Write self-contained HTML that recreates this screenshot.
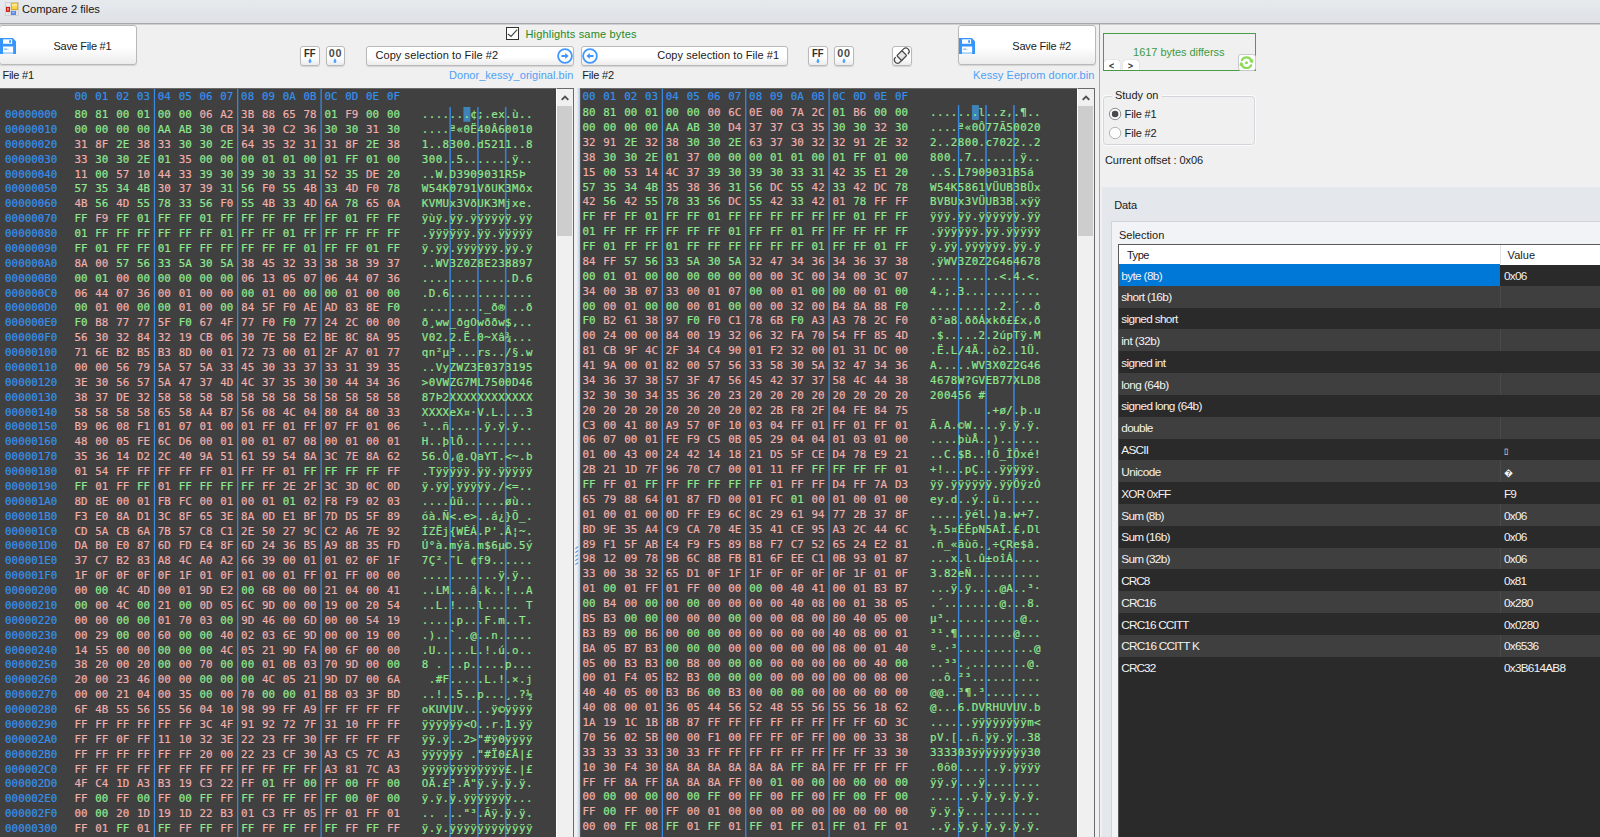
<!DOCTYPE html><html><head><meta charset="utf-8"><title>Compare 2 files</title><style>
*{box-sizing:border-box}
html,body{margin:0;padding:0}
body{width:1600px;height:837px;overflow:hidden;background:#f0f0f0;position:relative;font-family:"Liberation Sans",sans-serif;font-size:11.5px;color:#1a1a1a}
.abs,.t{position:absolute}
.t{white-space:pre;line-height:14px;height:14px}
.pn{position:absolute;background:#404040}
.r{position:absolute;left:0;height:14px;width:1100px;font-family:"DejaVu Sans Mono","Liberation Mono",monospace;font-size:10.83px;line-height:14px;white-space:pre}
.r span{position:absolute;top:0}
.r b{font-weight:normal}
.r span{-webkit-text-stroke:0.18px}
.o{color:#3590ee}
.h{word-spacing:1.270px}
.a{color:#8fe88f;letter-spacing:0.420px}
.g{color:#8fe88f}
.p{color:#f0aeac}
.hd{color:#3590ee}
.vl{position:absolute;height:837px}
.btn{position:absolute;border:1px solid #b9b9b9;border-radius:3px;background:linear-gradient(#fff 0%,#fff 55%,#ececec 100%);box-shadow:0 1px 1px rgba(0,0,0,.12)}
.sb{position:absolute;background:#f0f0f0}
</style></head><body>
<div class=pn style="left:0;top:88px;width:556px;height:749px;border-top:1px solid #6a6a6a"></div>
<svg class=abs style="left:0;top:0" width="1100" height="837"><rect x="153.82" y="88.8" width="1.25" height="748.2" fill="#3a8ae0"/><rect x="237.07" y="88.8" width="1.25" height="748.2" fill="#3a8ae0"/><rect x="320.48" y="88.8" width="1.25" height="748.2" fill="#3a8ae0"/></svg>
<svg class=abs style="left:0;top:0" width="1100" height="837"><rect x="449.35" y="107" width="1.6" height="730" fill="#3a80d0"/><rect x="477.15" y="107" width="1.6" height="730" fill="#3a80d0"/><rect x="504.90" y="107" width="1.6" height="730" fill="#3a80d0"/></svg>
<svg class=abs style="left:0;top:0" width="1100" height="837"><rect x="463.4" y="107" width="7.0" height="14.75" fill="#3f84b8"/></svg>
<div class=r style="top:90.25px"><span class="h hd" style="left:74.5px">00 01 02 03 04 05 06 07 08 09 0A 0B 0C 0D 0E 0F</span></div>
<div class=r style="top:108.05px"><span class=o style="left:5.1px">00000000</span><span class=h style="left:74.5px"><b class=g>80 81 00 01 00 00 </b><b class=p>06 A2 3B 88 65 78 </b><b class=g>01 </b><b class=p>F9 </b><b class=g>00 00</b></span><span class=a style="left:421.8px">.......¢;.ex.ù..</span></div>
<div class=r style="top:122.93px"><span class=o style="left:5.1px">00000010</span><span class=h style="left:74.5px"><b class=g>00 00 00 00 AA AB 30 </b><b class=p>CB 34 30 C2 36 </b><b class=g>30 30 </b><b class=p>31 </b><b class=g>30</b></span><span class=a style="left:421.8px">....ª«0Ë40Â60010</span></div>
<div class=r style="top:137.80px"><span class=o style="left:5.1px">00000020</span><span class=h style="left:74.5px"><b class=p>31 8F </b><b class=g>2E </b><b class=p>38 33 </b><b class=g>30 30 2E </b><b class=p>64 35 32 31 31 8F </b><b class=g>2E </b><b class=p>38</b></span><span class=a style="left:421.8px">1..8300.d5211..8</span></div>
<div class=r style="top:152.68px"><span class=o style="left:5.1px">00000030</span><span class=h style="left:74.5px"><b class=p>33 </b><b class=g>30 30 2E 01 </b><b class=p>35 </b><b class=g>00 00 00 01 01 00 01 FF 01 00</b></span><span class=a style="left:421.8px">300..5.......ÿ..</span></div>
<div class=r style="top:167.55px"><span class=o style="left:5.1px">00000040</span><span class=h style="left:74.5px"><b class=p>11 </b><b class=g>00 </b><b class=p>57 10 44 33 </b><b class=g>39 30 39 30 33 31 </b><b class=p>52 </b><b class=g>35 </b><b class=p>DE </b><b class=g>20</b></span><span class=a style="left:421.8px">..W.D3909031R5Þ </span></div>
<div class=r style="top:182.43px"><span class=o style="left:5.1px">00000050</span><span class=h style="left:74.5px"><b class=g>57 35 34 4B </b><b class=p>30 37 39 </b><b class=g>31 56 </b><b class=p>F0 </b><b class=g>55 </b><b class=p>4B </b><b class=g>33 </b><b class=p>4D F0 </b><b class=g>78</b></span><span class=a style="left:421.8px">W54K0791VðUK3Mðx</span></div>
<div class=r style="top:197.30px"><span class=o style="left:5.1px">00000060</span><span class=h style="left:74.5px"><b class=p>4B </b><b class=g>56 </b><b class=p>4D </b><b class=g>55 78 33 56 </b><b class=p>F0 </b><b class=g>55 </b><b class=p>4B </b><b class=g>33 </b><b class=p>4D 6A </b><b class=g>78 </b><b class=p>65 0A</b></span><span class=a style="left:421.8px">KVMUx3VðUK3Mjxe.</span></div>
<div class=r style="top:212.18px"><span class=o style="left:5.1px">00000070</span><span class=h style="left:74.5px"><b class=g>FF </b><b class=p>F9 </b><b class=g>FF 01 FF FF 01 FF FF FF FF FF FF 01 FF FF</b></span><span class=a style="left:421.8px">ÿùÿ.ÿÿ.ÿÿÿÿÿÿ.ÿÿ</span></div>
<div class=r style="top:227.05px"><span class=o style="left:5.1px">00000080</span><span class=h style="left:74.5px"><b class=g>01 FF FF FF FF FF FF 01 FF FF 01 FF FF FF FF FF</b></span><span class=a style="left:421.8px">.ÿÿÿÿÿÿ.ÿÿ.ÿÿÿÿÿ</span></div>
<div class=r style="top:241.93px"><span class=o style="left:5.1px">00000090</span><span class=h style="left:74.5px"><b class=g>FF 01 FF FF 01 FF FF FF FF FF FF 01 FF FF 01 FF</b></span><span class=a style="left:421.8px">ÿ.ÿÿ.ÿÿÿÿÿÿ.ÿÿ.ÿ</span></div>
<div class=r style="top:256.80px"><span class=o style="left:5.1px">000000A0</span><span class=h style="left:74.5px"><b class=p>8A 00 </b><b class=g>57 56 33 5A 30 5A </b><b class=p>38 45 32 33 38 38 39 37</b></span><span class=a style="left:421.8px">..WV3Z0Z8E238897</span></div>
<div class=r style="top:271.68px"><span class=o style="left:5.1px">000000B0</span><span class=h style="left:74.5px"><b class=g>00 01 </b><b class=p>00 </b><b class=g>00 00 00 00 00 </b><b class=p>06 13 05 07 06 44 07 36</b></span><span class=a style="left:421.8px">.............D.6</span></div>
<div class=r style="top:286.55px"><span class=o style="left:5.1px">000000C0</span><span class=h style="left:74.5px"><b class=p>06 44 07 36 00 01 00 00 </b><b class=g>00 </b><b class=p>01 00 </b><b class=g>00 00 </b><b class=p>01 00 </b><b class=g>00</b></span><span class=a style="left:421.8px">.D.6............</span></div>
<div class=r style="top:301.43px"><span class=o style="left:5.1px">000000D0</span><span class=h style="left:74.5px"><b class=g>00 </b><b class=p>01 00 </b><b class=g>00 00 </b><b class=p>01 00 </b><b class=g>00 </b><b class=p>84 5F F0 AE AD 83 8E </b><b class=g>F0</b></span><span class=a style="left:421.8px">........._ð® ..ð</span></div>
<div class=r style="top:316.30px"><span class=o style="left:5.1px">000000E0</span><span class=h style="left:74.5px"><b class=g>F0 </b><b class=p>B8 77 77 5F </b><b class=g>F0 </b><b class=p>67 4F 77 F0 </b><b class=g>F0 </b><b class=p>77 24 2C 00 00</b></span><span class=a style="left:421.8px">ð¸ww_ðgOwððw$,..</span></div>
<div class=r style="top:331.18px"><span class=o style="left:5.1px">000000F0</span><span class=h style="left:74.5px"><b class=p>56 30 32 84 32 19 CB 06 30 7E 58 E2 BE 8C 8A 95</b></span><span class=a style="left:421.8px">V02.2.Ë.0~Xâ¾...</span></div>
<div class=r style="top:346.05px"><span class=o style="left:5.1px">00000100</span><span class=h style="left:74.5px"><b class=p>71 6E B2 B5 B3 8D 00 01 72 73 00 01 2F A7 01 77</b></span><span class=a style="left:421.8px">qn²µ³...rs../§.w</span></div>
<div class=r style="top:360.93px"><span class=o style="left:5.1px">00000110</span><span class=h style="left:74.5px"><b class=p>00 00 56 79 5A 57 5A 33 45 30 33 37 33 31 39 35</b></span><span class=a style="left:421.8px">..VyZWZ3E0373195</span></div>
<div class=r style="top:375.80px"><span class=o style="left:5.1px">00000120</span><span class=h style="left:74.5px"><b class=p>3E 30 56 57 5A 47 37 4D 4C 37 35 30 30 44 34 36</b></span><span class=a style="left:421.8px">&gt;0VWZG7ML7500D46</span></div>
<div class=r style="top:390.68px"><span class=o style="left:5.1px">00000130</span><span class=h style="left:74.5px"><b class=p>38 37 DE 32 58 58 58 58 58 58 58 58 58 58 58 58</b></span><span class=a style="left:421.8px">87Þ2XXXXXXXXXXXX</span></div>
<div class=r style="top:405.55px"><span class=o style="left:5.1px">00000140</span><span class=h style="left:74.5px"><b class=p>58 58 58 58 65 58 A4 B7 56 08 4C 04 80 84 80 33</b></span><span class=a style="left:421.8px">XXXXeX¤·V.L....3</span></div>
<div class=r style="top:420.43px"><span class=o style="left:5.1px">00000150</span><span class=h style="left:74.5px"><b class=p>B9 06 08 F1 01 07 01 00 01 FF 01 FF 07 FF 01 06</b></span><span class=a style="left:421.8px">¹..ñ.....ÿ.ÿ.ÿ..</span></div>
<div class=r style="top:435.30px"><span class=o style="left:5.1px">00000160</span><span class=h style="left:74.5px"><b class=p>48 00 05 FE 6C D6 00 01 00 01 07 08 00 01 00 01</b></span><span class=a style="left:421.8px">H..þlÖ..........</span></div>
<div class=r style="top:450.18px"><span class=o style="left:5.1px">00000170</span><span class=h style="left:74.5px"><b class=p>35 36 14 D2 2C 40 9A 51 61 59 54 8A 3C 7E 8A 62</b></span><span class=a style="left:421.8px">56.Ò,@.QaYT.&lt;~.b</span></div>
<div class=r style="top:465.05px"><span class=o style="left:5.1px">00000180</span><span class=h style="left:74.5px"><b class=p>01 54 FF FF FF FF FF 01 FF FF 01 </b><b class=g>FF FF FF FF </b><b class=p>FF</b></span><span class=a style="left:421.8px">.Tÿÿÿÿÿ.ÿÿ.ÿÿÿÿÿ</span></div>
<div class=r style="top:479.93px"><span class=o style="left:5.1px">00000190</span><span class=h style="left:74.5px"><b class=g>FF </b><b class=p>01 FF </b><b class=g>FF </b><b class=p>01 </b><b class=g>FF FF FF FF </b><b class=p>FF 2E 2F 3C 3D 0C 0D</b></span><span class=a style="left:421.8px">ÿ.ÿÿ.ÿÿÿÿÿ./&lt;=..</span></div>
<div class=r style="top:494.80px"><span class=o style="left:5.1px">000001A0</span><span class=h style="left:74.5px"><b class=p>8D 8E 00 01 FB FC 00 01 00 01 </b><b class=g>01 </b><b class=p>02 F8 F9 02 03</b></span><span class=a style="left:421.8px">....ûü......øù..</span></div>
<div class=r style="top:509.67px"><span class=o style="left:5.1px">000001B0</span><span class=h style="left:74.5px"><b class=p>F3 E0 8A D1 3C 8F 65 3E 8A 0D E1 BF 7D D5 5F 89</b></span><span class=a style="left:421.8px">óà.Ñ&lt;.e&gt;..á¿}Õ_.</span></div>
<div class=r style="top:524.55px"><span class=o style="left:5.1px">000001C0</span><span class=h style="left:74.5px"><b class=p>CD 5A CB 6A 7B 57 C8 C1 2E 50 27 9C C2 A6 7E 92</b></span><span class=a style="left:421.8px">ÍZËj{WÈÁ.P'.Â¦~.</span></div>
<div class=r style="top:539.42px"><span class=o style="left:5.1px">000001D0</span><span class=h style="left:74.5px"><b class=p>DA B0 E0 87 6D FD E4 8F 6D 24 36 B5 A9 8B 35 FD</b></span><span class=a style="left:421.8px">Ú°à.mýä.m$6µ©.5ý</span></div>
<div class=r style="top:554.30px"><span class=o style="left:5.1px">000001E0</span><span class=h style="left:74.5px"><b class=p>37 C7 B2 83 A8 4C A0 A2 66 39 00 01 01 02 0F 1F</b></span><span class=a style="left:421.8px">7Ç².¨L ¢f9......</span></div>
<div class=r style="top:569.17px"><span class=o style="left:5.1px">000001F0</span><span class=h style="left:74.5px"><b class=p>1F 0F 0F 0F 0F 1F 01 0F 01 00 01 FF 01 FF 00 00</b></span><span class=a style="left:421.8px">...........ÿ.ÿ..</span></div>
<div class=r style="top:584.05px"><span class=o style="left:5.1px">00000200</span><span class=h style="left:74.5px"><b class=p>00 </b><b class=g>00 </b><b class=p>4C 4D 00 01 9D E2 </b><b class=g>00 </b><b class=p>6B 00 00 21 04 00 41</b></span><span class=a style="left:421.8px">..LM...â.k..!..A</span></div>
<div class=r style="top:598.92px"><span class=o style="left:5.1px">00000210</span><span class=h style="left:74.5px"><b class=g>00 </b><b class=p>00 4C </b><b class=g>00 </b><b class=p>21 </b><b class=g>00 </b><b class=p>0D 05 6C 9D 00 00 19 00 20 54</b></span><span class=a style="left:421.8px">..L.!...l..... T</span></div>
<div class=r style="top:613.80px"><span class=o style="left:5.1px">00000220</span><span class=h style="left:74.5px"><b class=p>00 00 </b><b class=g>00 00 </b><b class=p>01 70 03 </b><b class=g>00 </b><b class=p>9D 46 00 6D 00 00 54 19</b></span><span class=a style="left:421.8px">.....p...F.m..T.</span></div>
<div class=r style="top:628.67px"><span class=o style="left:5.1px">00000230</span><span class=h style="left:74.5px"><b class=p>00 29 </b><b class=g>00 </b><b class=p>00 60 </b><b class=g>00 00 </b><b class=p>40 02 03 6E 9D 00 00 19 00</b></span><span class=a style="left:421.8px">.)..`..@..n.....</span></div>
<div class=r style="top:643.55px"><span class=o style="left:5.1px">00000240</span><span class=h style="left:74.5px"><b class=p>14 55 00 00 </b><b class=g>00 00 00 </b><b class=p>4C 05 21 9D FA 00 6F 00 00</b></span><span class=a style="left:421.8px">.U.....L.!.ú.o..</span></div>
<div class=r style="top:658.42px"><span class=o style="left:5.1px">00000250</span><span class=h style="left:74.5px"><b class=p>38 20 00 20 </b><b class=g>00 </b><b class=p>00 70 </b><b class=g>00 00 </b><b class=p>01 0B 03 70 9D 00 </b><b class=g>00</b></span><span class=a style="left:421.8px">8 . ..p.....p...</span></div>
<div class=r style="top:673.30px"><span class=o style="left:5.1px">00000260</span><span class=h style="left:74.5px"><b class=p>20 00 23 46 00 00 </b><b class=g>00 00 00 </b><b class=p>4C 05 21 9D D7 00 6A</b></span><span class=a style="left:421.8px"> .#F.....L.!.×.j</span></div>
<div class=r style="top:688.17px"><span class=o style="left:5.1px">00000270</span><span class=h style="left:74.5px"><b class=p>00 00 21 04 00 35 </b><b class=g>00 </b><b class=p>00 70 </b><b class=g>00 00 </b><b class=p>01 B8 03 3F BD</b></span><span class=a style="left:421.8px">..!..5..p...¸.?½</span></div>
<div class=r style="top:703.05px"><span class=o style="left:5.1px">00000280</span><span class=h style="left:74.5px"><b class=p>6F 4B 55 56 55 56 04 10 98 99 FF A9 FF FF FF FF</b></span><span class=a style="left:421.8px">oKUVUV....ÿ©ÿÿÿÿ</span></div>
<div class=r style="top:717.92px"><span class=o style="left:5.1px">00000290</span><span class=h style="left:74.5px"><b class=p>FF FF FF FF FF FF 3C 4F 91 92 72 7F 31 10 FF FF</b></span><span class=a style="left:421.8px">ÿÿÿÿÿÿ&lt;O..r.1.ÿÿ</span></div>
<div class=r style="top:732.80px"><span class=o style="left:5.1px">000002A0</span><span class=h style="left:74.5px"><b class=p>FF FF 0F FF 11 10 32 3E 22 23 FF 30 FF FF FF FF</b></span><span class=a style="left:421.8px">ÿÿ.ÿ..2&gt;"#ÿ0ÿÿÿÿ</span></div>
<div class=r style="top:747.67px"><span class=o style="left:5.1px">000002B0</span><span class=h style="left:74.5px"><b class=p>FF FF FF FF FF FF 20 00 22 23 CF 30 A3 C5 7C A3</b></span><span class=a style="left:421.8px">ÿÿÿÿÿÿ ."#Ï0£Å|£</span></div>
<div class=r style="top:762.55px"><span class=o style="left:5.1px">000002C0</span><span class=h style="left:74.5px"><b class=p>FF FF FF FF FF FF FF FF FF FF </b><b class=g>FF </b><b class=p>FF A3 81 7C A3</b></span><span class=a style="left:421.8px">ÿÿÿÿÿÿÿÿÿÿÿÿ£.|£</span></div>
<div class=r style="top:777.42px"><span class=o style="left:5.1px">000002D0</span><span class=h style="left:74.5px"><b class=p>4F C4 1D A3 B3 19 C3 22 FF </b><b class=g>01 </b><b class=p>FF </b><b class=g>00 </b><b class=p>FF </b><b class=g>00 </b><b class=p>FF </b><b class=g>00</b></span><span class=a style="left:421.8px">OÄ.£³.Ã"ÿ.ÿ.ÿ.ÿ.</span></div>
<div class=r style="top:792.30px"><span class=o style="left:5.1px">000002E0</span><span class=h style="left:74.5px"><b class=p>FF </b><b class=g>00 </b><b class=p>FF </b><b class=g>00 </b><b class=p>FF </b><b class=g>00 FF </b><b class=p>FF </b><b class=g>FF </b><b class=p>FF </b><b class=g>FF </b><b class=p>FF </b><b class=g>FF 00 </b><b class=p>0F </b><b class=g>00</b></span><span class=a style="left:421.8px">ÿ.ÿ.ÿ.ÿÿÿÿÿÿÿ...</span></div>
<div class=r style="top:807.17px"><span class=o style="left:5.1px">000002F0</span><span class=h style="left:74.5px"><b class=p>00 </b><b class=g>00 </b><b class=p>20 1D 19 1D 22 B3 01 C3 FF 05 FF 01 FF 01</b></span><span class=a style="left:421.8px">.. ..."³.Ãÿ.ÿ.ÿ.</span></div>
<div class=r style="top:822.05px"><span class=o style="left:5.1px">00000300</span><span class=h style="left:74.5px"><b class=p>FF 01 </b><b class=g>FF </b><b class=p>01 </b><b class=g>FF </b><b class=p>FF </b><b class=g>FF </b><b class=p>FF </b><b class=g>FF </b><b class=p>FF </b><b class=g>FF </b><b class=p>FF </b><b class=g>FF </b><b class=p>FF </b><b class=g>FF </b><b class=p>FF</b></span><span class=a style="left:421.8px">ÿ.ÿ.ÿÿÿÿÿÿÿÿÿÿÿÿ</span></div>
<div class=sb style="left:556px;top:88px;width:18px;height:749px;background:#f0f0f0;border-left:1px solid #fff;border-right:1px solid #6a6a6a;border-top:1px solid #6a6a6a"></div>
<div class=abs style="left:557px;top:106px;width:15.3px;height:130px;background:#cdcdcd"></div>
<svg class=abs style="left:557px;top:89px" width="16" height="17" viewBox="0 0 16 17"><path d="M4.7 10.9 L8 7.6 L11.3 10.9" fill="none" stroke="#505050" stroke-width="1.9"/></svg>
<div class=abs style="left:577.3px;top:88px;width:2.7px;height:749px;background:linear-gradient(90deg,#f0f0f0,#a9c8f0)"></div>
<div class=pn style="left:580px;top:88px;width:497px;height:749px;border-top:1px solid #6a6a6a;border-left:1px solid #555"></div>
<svg class=abs style="left:0;top:0" width="1100" height="837"><rect x="661.77" y="88.8" width="1.25" height="748.2" fill="#3a8ae0"/><rect x="745.12" y="88.8" width="1.25" height="748.2" fill="#3a8ae0"/><rect x="828.48" y="88.8" width="1.25" height="748.2" fill="#3a8ae0"/></svg>
<svg class=abs style="left:0;top:0" width="1100" height="837"><rect x="957.90" y="105.1" width="1.4" height="731.9" fill="#3a8ae0"/></svg>
<svg class=abs style="left:0;top:0" width="1100" height="837"><rect x="985.20" y="105.1" width="1.7" height="731.9" fill="#3a80d0"/><rect x="1013.10" y="105.1" width="1.7" height="731.9" fill="#3a80d0"/></svg>
<svg class=abs style="left:0;top:0" width="1100" height="837"><rect x="971.9" y="105.1" width="7.0" height="14.8" fill="#3f84b8"/></svg>
<div class=r style="top:90.25px"><span class="h hd" style="left:582.5px">00 01 02 03 04 05 06 07 08 09 0A 0B 0C 0D 0E 0F</span></div>
<div class=r style="top:106.20px"><span class=h style="left:582.5px"><b class=g>80 81 00 01 00 00 </b><b class=p>00 6C 0E 00 7A 2C </b><b class=g>01 </b><b class=p>B6 </b><b class=g>00 00</b></span><span class=a style="left:930.0px">.......l..z,.¶..</span></div>
<div class=r style="top:121.08px"><span class=h style="left:582.5px"><b class=g>00 00 00 00 AA AB 30 </b><b class=p>D4 37 37 C3 35 </b><b class=g>30 30 </b><b class=p>32 </b><b class=g>30</b></span><span class=a style="left:930.0px">....ª«0Ô77Ã50020</span></div>
<div class=r style="top:135.95px"><span class=h style="left:582.5px"><b class=p>32 91 </b><b class=g>2E </b><b class=p>32 38 </b><b class=g>30 30 2E </b><b class=p>63 37 30 32 32 91 </b><b class=g>2E </b><b class=p>32</b></span><span class=a style="left:930.0px">2..2800.c7022..2</span></div>
<div class=r style="top:150.82px"><span class=h style="left:582.5px"><b class=p>38 </b><b class=g>30 30 2E 01 </b><b class=p>37 </b><b class=g>00 00 00 01 01 00 01 FF 01 00</b></span><span class=a style="left:930.0px">800..7.......ÿ..</span></div>
<div class=r style="top:165.70px"><span class=h style="left:582.5px"><b class=p>15 </b><b class=g>00 </b><b class=p>53 14 4C 37 </b><b class=g>39 30 39 30 33 31 </b><b class=p>42 </b><b class=g>35 </b><b class=p>E1 </b><b class=g>20</b></span><span class=a style="left:930.0px">..S.L7909031B5á </span></div>
<div class=r style="top:180.57px"><span class=h style="left:582.5px"><b class=g>57 35 34 4B </b><b class=p>35 38 36 </b><b class=g>31 56 </b><b class=p>DC </b><b class=g>55 </b><b class=p>42 </b><b class=g>33 </b><b class=p>42 DC </b><b class=g>78</b></span><span class=a style="left:930.0px">W54K5861VÜUB3BÜx</span></div>
<div class=r style="top:195.45px"><span class=h style="left:582.5px"><b class=p>42 </b><b class=g>56 </b><b class=p>42 </b><b class=g>55 78 33 56 </b><b class=p>DC </b><b class=g>55 </b><b class=p>42 </b><b class=g>33 </b><b class=p>42 01 </b><b class=g>78 </b><b class=p>FF FF</b></span><span class=a style="left:930.0px">BVBUx3VÜUB3B.xÿÿ</span></div>
<div class=r style="top:210.32px"><span class=h style="left:582.5px"><b class=g>FF </b><b class=p>FF </b><b class=g>FF 01 FF FF 01 FF FF FF FF FF FF 01 FF FF</b></span><span class=a style="left:930.0px">ÿÿÿ.ÿÿ.ÿÿÿÿÿÿ.ÿÿ</span></div>
<div class=r style="top:225.20px"><span class=h style="left:582.5px"><b class=g>01 FF FF FF FF FF FF 01 FF FF 01 FF FF FF FF FF</b></span><span class=a style="left:930.0px">.ÿÿÿÿÿÿ.ÿÿ.ÿÿÿÿÿ</span></div>
<div class=r style="top:240.07px"><span class=h style="left:582.5px"><b class=g>FF 01 FF FF 01 FF FF FF FF FF FF 01 FF FF 01 FF</b></span><span class=a style="left:930.0px">ÿ.ÿÿ.ÿÿÿÿÿÿ.ÿÿ.ÿ</span></div>
<div class=r style="top:254.95px"><span class=h style="left:582.5px"><b class=p>84 FF </b><b class=g>57 56 33 5A 30 5A </b><b class=p>32 47 34 36 34 36 37 38</b></span><span class=a style="left:930.0px">.ÿWV3Z0Z2G464678</span></div>
<div class=r style="top:269.82px"><span class=h style="left:582.5px"><b class=g>00 01 </b><b class=p>01 </b><b class=g>00 00 00 00 00 </b><b class=p>00 00 3C 00 34 00 3C 07</b></span><span class=a style="left:930.0px">..........&lt;.4.&lt;.</span></div>
<div class=r style="top:284.70px"><span class=h style="left:582.5px"><b class=p>34 00 3B 07 33 00 01 07 </b><b class=g>00 </b><b class=p>00 01 </b><b class=g>00 00 </b><b class=p>00 01 </b><b class=g>00</b></span><span class=a style="left:930.0px">4.;.3...........</span></div>
<div class=r style="top:299.57px"><span class=h style="left:582.5px"><b class=g>00 </b><b class=p>00 01 </b><b class=g>00 00 </b><b class=p>00 01 </b><b class=g>00 </b><b class=p>00 00 32 00 B4 8A 88 </b><b class=g>F0</b></span><span class=a style="left:930.0px">..........2.´..ð</span></div>
<div class=r style="top:314.45px"><span class=h style="left:582.5px"><b class=g>F0 </b><b class=p>B2 61 38 97 </b><b class=g>F0 </b><b class=p>F0 C1 78 6B </b><b class=g>F0 </b><b class=p>A3 A3 78 2C F0</b></span><span class=a style="left:930.0px">ð²a8.ððÁxkð££x,ð</span></div>
<div class=r style="top:329.32px"><span class=h style="left:582.5px"><b class=p>00 24 00 00 84 00 19 32 06 32 FA 70 54 FF 85 4D</b></span><span class=a style="left:930.0px">.$.....2.2úpTÿ.M</span></div>
<div class=r style="top:344.20px"><span class=h style="left:582.5px"><b class=p>81 CB 9F 4C 2F 34 C4 90 01 F2 32 00 01 31 DC 00</b></span><span class=a style="left:930.0px">.Ë.L/4Ä..ò2..1Ü.</span></div>
<div class=r style="top:359.07px"><span class=h style="left:582.5px"><b class=p>41 9A 00 01 82 00 57 56 33 58 30 5A 32 47 34 36</b></span><span class=a style="left:930.0px">A.....WV3X0Z2G46</span></div>
<div class=r style="top:373.95px"><span class=h style="left:582.5px"><b class=p>34 36 37 38 57 3F 47 56 45 42 37 37 58 4C 44 38</b></span><span class=a style="left:930.0px">4678W?GVEB77XLD8</span></div>
<div class=r style="top:388.82px"><span class=h style="left:582.5px"><b class=p>32 30 30 34 35 36 20 23 20 20 20 20 20 20 20 20</b></span><span class=a style="left:930.0px">200456 #        </span></div>
<div class=r style="top:403.70px"><span class=h style="left:582.5px"><b class=p>20 20 20 20 20 20 20 20 02 2B F8 2F 04 FE 84 75</b></span><span class=a style="left:930.0px">        .+ø/.þ.u</span></div>
<div class=r style="top:418.57px"><span class=h style="left:582.5px"><b class=p>C3 00 41 80 A9 57 0F 10 03 04 FF 01 FF 01 FF 01</b></span><span class=a style="left:930.0px">Ã.A.©W....ÿ.ÿ.ÿ.</span></div>
<div class=r style="top:433.45px"><span class=h style="left:582.5px"><b class=p>06 07 00 01 FE F9 C5 0B 05 29 04 04 01 03 01 00</b></span><span class=a style="left:930.0px">....þùÅ..)......</span></div>
<div class=r style="top:448.32px"><span class=h style="left:582.5px"><b class=p>01 00 43 00 24 42 14 18 21 D5 5F CE D4 78 E9 21</b></span><span class=a style="left:930.0px">..C.$B..!Õ_ÎÔxé!</span></div>
<div class=r style="top:463.20px"><span class=h style="left:582.5px"><b class=p>2B 21 1D 7F 96 70 C7 00 01 11 FF </b><b class=g>FF FF FF FF </b><b class=p>01</b></span><span class=a style="left:930.0px">+!...pÇ...ÿÿÿÿÿ.</span></div>
<div class=r style="top:478.07px"><span class=h style="left:582.5px"><b class=g>FF </b><b class=p>FF 01 </b><b class=g>FF </b><b class=p>FF </b><b class=g>FF FF FF FF </b><b class=p>01 FF FF D4 FF 7A D3</b></span><span class=a style="left:930.0px">ÿÿ.ÿÿÿÿÿÿ.ÿÿÔÿzÓ</span></div>
<div class=r style="top:492.95px"><span class=h style="left:582.5px"><b class=p>65 79 88 64 01 87 FD 00 01 FC </b><b class=g>01 </b><b class=p>00 01 00 01 00</b></span><span class=a style="left:930.0px">ey.d..ý..ü......</span></div>
<div class=r style="top:507.83px"><span class=h style="left:582.5px"><b class=p>01 00 01 00 0D FF E9 6C 8C 29 61 94 77 2B 37 8F</b></span><span class=a style="left:930.0px">.....ÿél.)a.w+7.</span></div>
<div class=r style="top:522.70px"><span class=h style="left:582.5px"><b class=p>BD 9E 35 A4 C9 CA 70 4E 35 41 CE 95 A3 2C 44 6C</b></span><span class=a style="left:930.0px">½.5¤ÉÊpN5AÎ.£,Dl</span></div>
<div class=r style="top:537.58px"><span class=h style="left:582.5px"><b class=p>89 F1 5F AB E4 F9 F5 89 B8 F7 C7 52 65 24 E2 81</b></span><span class=a style="left:930.0px">.ñ_«äùõ.¸÷ÇRe$â.</span></div>
<div class=r style="top:552.45px"><span class=h style="left:582.5px"><b class=p>98 12 09 78 9B 6C 8B FB B1 6F EE C1 0B 93 01 87</b></span><span class=a style="left:930.0px">...x.l.û±oîÁ....</span></div>
<div class=r style="top:567.33px"><span class=h style="left:582.5px"><b class=p>33 00 38 32 65 D1 0F 1F 1F 0F 0F 0F 0F 1F 01 0F</b></span><span class=a style="left:930.0px">3.82eÑ..........</span></div>
<div class=r style="top:582.20px"><span class=h style="left:582.5px"><b class=p>01 </b><b class=g>00 </b><b class=p>01 FF 01 FF 00 00 </b><b class=g>00 </b><b class=p>00 40 41 00 01 B3 B7</b></span><span class=a style="left:930.0px">...ÿ.ÿ....@A..³·</span></div>
<div class=r style="top:597.08px"><span class=h style="left:582.5px"><b class=g>00 </b><b class=p>B4 00 </b><b class=g>00 </b><b class=p>00 </b><b class=g>00 </b><b class=p>00 00 00 00 40 08 00 01 38 05</b></span><span class=a style="left:930.0px">.´........@...8.</span></div>
<div class=r style="top:611.95px"><span class=h style="left:582.5px"><b class=p>B5 B3 </b><b class=g>00 00 </b><b class=p>00 00 00 </b><b class=g>00 </b><b class=p>00 00 08 00 80 40 05 00</b></span><span class=a style="left:930.0px">µ³...........@..</span></div>
<div class=r style="top:626.83px"><span class=h style="left:582.5px"><b class=p>B3 B9 </b><b class=g>00 </b><b class=p>B6 00 </b><b class=g>00 00 </b><b class=p>00 00 00 00 00 40 08 00 01</b></span><span class=a style="left:930.0px">³¹.¶........@...</span></div>
<div class=r style="top:641.70px"><span class=h style="left:582.5px"><b class=p>BA 05 B7 B3 </b><b class=g>00 00 00 </b><b class=p>00 00 00 00 00 08 00 01 40</b></span><span class=a style="left:930.0px">º.·³...........@</span></div>
<div class=r style="top:656.58px"><span class=h style="left:582.5px"><b class=p>05 00 B3 B3 </b><b class=g>00 </b><b class=p>B8 00 </b><b class=g>00 00 </b><b class=p>00 00 00 00 00 40 </b><b class=g>00</b></span><span class=a style="left:930.0px">..³³.¸........@.</span></div>
<div class=r style="top:671.45px"><span class=h style="left:582.5px"><b class=p>00 01 F4 05 B2 B3 </b><b class=g>00 00 00 </b><b class=p>00 00 00 00 00 08 00</b></span><span class=a style="left:930.0px">..ô.²³..........</span></div>
<div class=r style="top:686.33px"><span class=h style="left:582.5px"><b class=p>40 40 05 00 B3 B6 </b><b class=g>00 </b><b class=p>B3 00 </b><b class=g>00 00 </b><b class=p>00 00 00 00 00</b></span><span class=a style="left:930.0px">@@..³¶.³........</span></div>
<div class=r style="top:701.20px"><span class=h style="left:582.5px"><b class=p>40 08 00 01 36 05 44 56 52 48 55 56 55 56 18 62</b></span><span class=a style="left:930.0px">@...6.DVRHUVUV.b</span></div>
<div class=r style="top:716.08px"><span class=h style="left:582.5px"><b class=p>1A 19 1C 1B 8B 87 FF FF FF FF FF FF FF FF 6D 3C</b></span><span class=a style="left:930.0px">......ÿÿÿÿÿÿÿÿm&lt;</span></div>
<div class=r style="top:730.95px"><span class=h style="left:582.5px"><b class=p>70 56 02 5B 00 00 F1 00 FF FF 0F FF 00 00 33 38</b></span><span class=a style="left:930.0px">pV.[..ñ.ÿÿ.ÿ..38</span></div>
<div class=r style="top:745.83px"><span class=h style="left:582.5px"><b class=p>33 33 33 33 30 33 FF FF FF FF FF FF FF FF 33 30</b></span><span class=a style="left:930.0px">333303ÿÿÿÿÿÿÿÿ30</span></div>
<div class=r style="top:760.70px"><span class=h style="left:582.5px"><b class=p>10 30 F4 30 8A 8A 8A 8A 8A 8A </b><b class=g>FF </b><b class=p>8A FF FF FF FF</b></span><span class=a style="left:930.0px">.0ô0......ÿ.ÿÿÿÿ</span></div>
<div class=r style="top:775.58px"><span class=h style="left:582.5px"><b class=p>FF FF 8A FF 8A 8A 8A FF 00 </b><b class=g>01 </b><b class=p>00 </b><b class=g>00 </b><b class=p>00 </b><b class=g>00 </b><b class=p>00 </b><b class=g>00</b></span><span class=a style="left:930.0px">ÿÿ.ÿ...ÿ........</span></div>
<div class=r style="top:790.45px"><span class=h style="left:582.5px"><b class=p>00 </b><b class=g>00 </b><b class=p>00 </b><b class=g>00 </b><b class=p>00 </b><b class=g>00 FF </b><b class=p>00 </b><b class=g>FF </b><b class=p>00 </b><b class=g>FF </b><b class=p>00 </b><b class=g>FF 00 </b><b class=p>FF </b><b class=g>00</b></span><span class=a style="left:930.0px">......ÿ.ÿ.ÿ.ÿ.ÿ.</span></div>
<div class=r style="top:805.33px"><span class=h style="left:582.5px"><b class=p>FF </b><b class=g>00 </b><b class=p>FF 00 FF 00 01 00 00 00 00 00 00 00 00 00</b></span><span class=a style="left:930.0px">ÿ.ÿ.ÿ...........</span></div>
<div class=r style="top:820.20px"><span class=h style="left:582.5px"><b class=p>00 00 </b><b class=g>FF </b><b class=p>08 </b><b class=g>FF </b><b class=p>01 </b><b class=g>FF </b><b class=p>01 </b><b class=g>FF </b><b class=p>01 </b><b class=g>FF </b><b class=p>01 </b><b class=g>FF </b><b class=p>01 </b><b class=g>FF </b><b class=p>01</b></span><span class=a style="left:930.0px">..ÿ.ÿ.ÿ.ÿ.ÿ.ÿ.ÿ.</span></div>
<div class=sb style="left:1077px;top:88px;width:18px;height:749px;background:#f0f0f0;border-left:1px solid #fff;border-right:1px solid #6a6a6a;border-top:1px solid #6a6a6a"></div>
<div class=abs style="left:1078px;top:106px;width:15.3px;height:130px;background:#cdcdcd"></div>
<svg class=abs style="left:1078px;top:89px" width="16" height="17" viewBox="0 0 16 17"><path d="M4.7 10.9 L8 7.6 L11.3 10.9" fill="none" stroke="#505050" stroke-width="1.9"/></svg>
<div class=abs style="left:0;top:0;width:1600px;height:23px;background:linear-gradient(#e7eaed,#dde0e6)"></div><div class=abs style="left:0;top:23px;width:1600px;height:1px;background:#a7a7ad"></div><div class=abs style="left:0;top:24px;width:1600px;height:1px;background:#d0d0d3"></div>
<svg class=abs style="left:5px;top:2px" width="14" height="14" viewBox="5 2 14 14">
<rect x="5.4" y="2.4" width="13.2" height="13.1" fill="#e9ebee" stroke="#c6c6c8" stroke-width=".7"/>
<path d="M10.4 2.4V15.5M5.4 6.4H10.4M5.4 12.4H10.4M8.3 12.4V15.5M16.5 10.4V15.5M10.4 10.4H18.6" stroke="#d6d6d8" stroke-width=".6" fill="none"/>
<rect x="6" y="6.9" width="4" height="5" fill="#c41c0c"/><rect x="7" y="7.9" width="1.9" height="2.6" fill="#f08a80"/>
<rect x="10.9" y="2.8" width="7.2" height="7.1" fill="#d6a212"/><rect x="11.8" y="3.7" width="5.4" height="5.2" fill="#fdd44a"/><rect x="11.8" y="3.7" width="5.4" height="2.4" fill="#ffe88e"/>
<rect x="10.9" y="10.9" width="5.1" height="4" fill="#4a7fe0"/><rect x="11.7" y="11.6" width="3.4" height="1.8" fill="#8fb4f6"/>
</svg>
<div class=t style="left:22.0px;top:3.00px;font-size:11.2px;line-height:12px;height:12px;color:#161616;letter-spacing:-0.030px;">Compare 2 files</div>
<div class=btn style="left:-1px;top:25px;width:137.6px;height:40px"></div>
<svg class=abs style="left:-0.2px;top:37.6px" width="16.2" height="16.2" viewBox="0 0 16 16">
<path d="M0 0H12.6L16 3.4V16H0Z" fill="#3595fb"/>
<rect x="3" y="1.3" width="9" height="4.4" fill="#fff"/><rect x="9.1" y="2" width="1.7" height="3" rx=".8" fill="#3595fb"/>
<rect x="3" y="8.4" width="10" height="6.1" fill="#fff"/><rect x="3" y="14.5" width="10" height="1.5" fill="#b4d6fb"/>
<rect x="4.2" y="10.3" width="3" height="1.5" fill="#8fc0f8"/><rect x="7" y="11.2" width="2" height=".8" fill="#c2dcfa"/>
</svg>
<div class=t style="left:53.5px;top:40.00px;font-size:11.0px;line-height:12px;height:12px;color:#1a1a1a;letter-spacing:-0.279px;">Save File #1</div>
<div class=btn style="left:958px;top:25px;width:137.6px;height:40px"></div>
<svg class=abs style="left:959px;top:37.7px" width="16.2" height="16.2" viewBox="0 0 16 16">
<path d="M0 0H12.6L16 3.4V16H0Z" fill="#3595fb"/>
<rect x="3" y="1.3" width="9" height="4.4" fill="#fff"/><rect x="9.1" y="2" width="1.7" height="3" rx=".8" fill="#3595fb"/>
<rect x="3" y="8.4" width="10" height="6.1" fill="#fff"/><rect x="3" y="14.5" width="10" height="1.5" fill="#b4d6fb"/>
<rect x="4.2" y="10.3" width="3" height="1.5" fill="#8fc0f8"/><rect x="7" y="11.2" width="2" height=".8" fill="#c2dcfa"/>
</svg>
<div class=t style="left:1012.3px;top:40.00px;font-size:11.0px;line-height:12px;height:12px;color:#1a1a1a;letter-spacing:-0.204px;">Save File #2</div>
<div class=t style="left:2.4px;top:69.00px;font-size:11.0px;line-height:12px;height:12px;color:#1a1a1a;letter-spacing:-0.218px;">File #1</div>
<div class=t style="left:582.2px;top:69.00px;font-size:11.0px;line-height:12px;height:12px;color:#1a1a1a;letter-spacing:-0.176px;">File #2</div>
<div class=t style="left:449.1px;top:69.00px;font-size:11.0px;line-height:12px;height:12px;color:#4f9ff6;letter-spacing:0.028px;">Donor_kessy_original.bin</div>
<div class=t style="left:973.1px;top:69.00px;font-size:11.0px;line-height:12px;height:12px;color:#4f9ff6;letter-spacing:0.070px;">Kessy Eeprom donor.bin</div>
<div class=btn style="left:300.25px;top:46px;width:19.4px;height:19.6px"></div>
<div class=t style="left:304.1px;top:47.00px;font-size:10.8px;line-height:12px;height:12px;color:#2e2e2e;transform:scaleX(.88);transform-origin:0 0;font-weight:bold;">FF</div>
<svg class=abs style="left:307.85px;top:57.8px" width="4" height="5.4" viewBox="0 0 4 5.4"><path d="M2 .2C2.9 1.6 3.4 2.6 3.4 3.5A1.4 1.5 0 0 1 .6 3.5C.6 2.6 1.1 1.6 2 .2Z" fill="#48a0ff"/></svg>
<div class=btn style="left:325.6px;top:46px;width:19.4px;height:19.6px"></div>
<div class=t style="left:328.7px;top:47.00px;font-size:10.8px;line-height:12px;height:12px;color:#4a4a4a;letter-spacing:0.7px;font-weight:bold;">00</div>
<svg class=abs style="left:333.20px;top:57.8px" width="4" height="5.4" viewBox="0 0 4 5.4"><path d="M2 .2C2.9 1.6 3.4 2.6 3.4 3.5A1.4 1.5 0 0 1 .6 3.5C.6 2.6 1.1 1.6 2 .2Z" fill="#48a0ff"/></svg>
<div class=btn style="left:808.3px;top:46px;width:19.4px;height:19.6px"></div>
<div class=t style="left:812.2px;top:47.00px;font-size:10.8px;line-height:12px;height:12px;color:#2e2e2e;transform:scaleX(.88);transform-origin:0 0;font-weight:bold;">FF</div>
<svg class=abs style="left:815.90px;top:57.8px" width="4" height="5.4" viewBox="0 0 4 5.4"><path d="M2 .2C2.9 1.6 3.4 2.6 3.4 3.5A1.4 1.5 0 0 1 .6 3.5C.6 2.6 1.1 1.6 2 .2Z" fill="#48a0ff"/></svg>
<div class=btn style="left:834.2px;top:46px;width:19.4px;height:19.6px"></div>
<div class=t style="left:837.3px;top:47.00px;font-size:10.8px;line-height:12px;height:12px;color:#4a4a4a;letter-spacing:0.7px;font-weight:bold;">00</div>
<svg class=abs style="left:841.80px;top:57.8px" width="4" height="5.4" viewBox="0 0 4 5.4"><path d="M2 .2C2.9 1.6 3.4 2.6 3.4 3.5A1.4 1.5 0 0 1 .6 3.5C.6 2.6 1.1 1.6 2 .2Z" fill="#48a0ff"/></svg>
<div class=btn style="left:366px;top:46px;width:208px;height:19.6px"></div>
<div class=t style="left:375.4px;top:49.00px;font-size:11.0px;line-height:12px;height:12px;color:#1a1a1a;letter-spacing:0.098px;">Copy selection to File #2</div>
<svg class=abs style="left:557.2px;top:47.7px" width="16" height="16" viewBox="0 0 16 16">
<circle cx="8" cy="8" r="6.9" fill="#fff" stroke="#3f98fb" stroke-width="1.8"/>
<path d="M4.4 7.1H8.2V4.9L11.7 8L8.2 11.1V8.9H4.4Z" fill="#3f98fb"/></svg>
<div class=btn style="left:580.6px;top:46px;width:207.2px;height:19.6px"></div>
<div class=t style="left:657.2px;top:49.00px;font-size:11.0px;line-height:12px;height:12px;color:#1a1a1a;letter-spacing:0.062px;">Copy selection to File #1</div>
<svg class=abs style="left:582.0px;top:47.7px" width="16" height="16" viewBox="0 0 16 16">
<circle cx="8" cy="8" r="6.9" fill="#fff" stroke="#3f98fb" stroke-width="1.8"/>
<path d="M11.6 7.1H7.8V4.9L4.3 8L7.8 11.1V8.9H11.6Z" fill="#3f98fb"/></svg>
<div class=abs style="left:506.2px;top:27.1px;width:13px;height:13px;background:#fff;border:1px solid #333"></div>
<svg class=abs style="left:506.2px;top:27.1px" width="13" height="13" viewBox="0 0 13 13"><path d="M1.8 6.9L5 9.3L11.2 2.6" fill="none" stroke="#4a4a4a" stroke-width="1.25"/></svg>
<div class=t style="left:525.5px;top:28.00px;font-size:11.0px;line-height:12px;height:12px;color:#1f8a1f;letter-spacing:0.166px;">Highlights same bytes</div>
<div class=btn style="left:892px;top:46px;width:19.8px;height:19.6px"></div>
<svg class=abs style="left:892.3px;top:46px" width="19.5" height="19.2" viewBox="0 0 19.5 19.2">
<g transform="translate(9.75 9.6) rotate(-45)" fill="none" stroke="#484848" stroke-width="1.25" stroke-linecap="round">
<rect x="-3.6" y="-3.4" width="7.2" height="6.8" rx=".8" fill="#e6e6e6"/>
<path d="M3.6 -3.4H6.8A3.4 3.4 0 0 1 5.8 3.25"/>
<path d="M-3.6 3.4H-6.8A3.4 3.4 0 0 1 -5.8 -3.25"/></g></svg>
<div class=abs style="left:1099.1px;top:24px;width:1.1px;height:813px;background:#a9a9a9"></div>
<div class=abs style="left:1102.8px;top:32.6px;width:153px;height:38.6px;border:1.2px solid #4a9e4a"></div>
<div class=t style="left:1133.1px;top:46.00px;font-size:11.0px;line-height:12px;height:12px;color:#3f9a3f;letter-spacing:-0.039px;">1617 bytes differss</div>
<div class=abs style="left:1103.8px;top:59.8px;width:15.8px;height:10.6px;background:#fff;border-radius:3px 3px 0 0;box-shadow:0 0 1px rgba(0,0,0,.35)"></div>
<div class=t style="left:1109.0px;top:61.00px;font-size:8.6px;line-height:10px;height:10px;color:#3a3a3a;-webkit-text-stroke:0.35px;">&lt;</div>
<div class=abs style="left:1122.8px;top:59.8px;width:15.8px;height:10.6px;background:#fff;border-radius:3px 3px 0 0;box-shadow:0 0 1px rgba(0,0,0,.35)"></div>
<div class=t style="left:1128.0px;top:61.00px;font-size:8.6px;line-height:10px;height:10px;color:#3a3a3a;-webkit-text-stroke:0.35px;">&gt;</div>
<div class=abs style="left:1238.1px;top:53.7px;width:17.5px;height:17.2px;background:#fefefe;border:1px solid #c9c9cd;border-radius:3px"></div>
<svg class=abs style="left:1238.1px;top:53.7px" width="17.5" height="17.2" viewBox="0 0 17.5 17.2">
<g fill="none" stroke="#8bdb58" stroke-width="2.1" stroke-linecap="round"><path d="M3.82 6.21A5.3 5.3 0 0 1 13.3 6.46"/><path d="M13.18 11.19A5.3 5.3 0 0 1 3.7 10.94"/></g>
<g fill="#8bdb58" stroke="#8bdb58" stroke-width=".8" stroke-linejoin="round"><path d="M15.1 5.7L11.6 7.3L14.4 8.9Z"/><path d="M1.9 11.7L5.4 10.1L2.6 8.5Z"/></g>
<circle cx="8.5" cy="8.7" r="1.5" fill="#8bdb58"/></svg>
<div class=abs style="left:1103px;top:96px;width:151.8px;height:48.7px;border:1px solid #d3d5da;border-radius:3.5px;box-shadow:0 0 0 1px rgba(255,255,255,.7)"></div>
<div class=abs style="left:1111.5px;top:90px;width:50px;height:12px;background:#f0f0f0"></div>
<div class=t style="left:1114.9px;top:89.00px;font-size:11.0px;line-height:12px;height:12px;color:#1a1a1a;letter-spacing:0.022px;">Study on</div>
<svg class=abs style="left:1108px;top:107.4px" width="14" height="14" viewBox="0 0 14 14"><circle cx="7.1" cy="7" r="5.7" fill="#fdfdfd" stroke="#8e8e8e" stroke-width="1"/><circle cx="7.1" cy="7" r="3.3" fill="#4a4a4e"/></svg>
<div class=t style="left:1124.6px;top:108.00px;font-size:11.0px;line-height:12px;height:12px;color:#1a1a1a;letter-spacing:-0.176px;">File #1</div>
<svg class=abs style="left:1108px;top:126.4px" width="14" height="14" viewBox="0 0 14 14"><circle cx="7.1" cy="7" r="5.7" fill="#fdfdfd" stroke="#b4b4b4" stroke-width="1"/></svg>
<div class=t style="left:1124.6px;top:127.00px;font-size:11.0px;line-height:12px;height:12px;color:#1a1a1a;letter-spacing:-0.176px;">File #2</div>
<div class=t style="left:1105.0px;top:154.00px;font-size:11.0px;line-height:12px;height:12px;color:#1a1a1a;letter-spacing:-0.070px;">Current offset : 0x06</div>
<div class=abs style="left:1101.6px;top:187.3px;width:500px;height:650px;background:#e4e7ec"></div>
<div class=t style="left:1114.3px;top:199.00px;font-size:11.0px;line-height:12px;height:12px;color:#1a1a1a;letter-spacing:-0.137px;">Data</div>
<div class=abs style="left:1110.7px;top:221px;width:500px;height:620px;background:#f1f3f6;border:1px solid #d0d3d8"></div>
<div class=t style="left:1118.9px;top:229.00px;font-size:11.0px;line-height:12px;height:12px;color:#1a1a1a;letter-spacing:0.016px;">Selection</div>
<div class=abs style="left:1117.7px;top:244.0px;width:490px;height:600px;background:#2a2a2a;border-left:1px solid #5a5a5a;border-top:1px solid #5a5a5a"></div>
<div class=abs style="left:1118.7px;top:245.0px;width:490px;height:19.5px;background:#fff"></div>
<div class=abs style="left:1499.6px;top:245.0px;width:1px;height:19.4px;background:#e0e0e0"></div>
<div class=t style="left:1126.9px;top:249.00px;font-size:11.0px;line-height:12px;height:12px;color:#1a1a1a;letter-spacing:-0.437px;">Type</div>
<div class=t style="left:1507.6px;top:249.00px;font-size:11.0px;line-height:12px;height:12px;color:#1a1a1a;letter-spacing:0.054px;">Value</div>
<div class=abs style="left:1118.7px;top:263.97px;width:381.3px;height:21.82px;background:#0078d7"></div>
<div class=t style="left:1121.3px;top:269.00px;font-size:11.8px;line-height:14px;height:14px;color:#f2f2f2;letter-spacing:-0.652px;">byte (8b)</div>
<div class=t style="left:1504.0px;top:269.00px;font-size:11.8px;line-height:14px;height:14px;color:#f2f2f2;letter-spacing:-0.749px;">0x06</div>
<div class=abs style="left:1118.7px;top:285.79px;width:490px;height:21.82px;background:#3f3f3f"></div>
<div class=abs style="left:1499.6px;top:285.79px;width:1px;height:21.82px;background:#4a4a4a"></div>
<div class=t style="left:1121.3px;top:290.00px;font-size:11.8px;line-height:14px;height:14px;color:#f2f2f2;letter-spacing:-0.615px;">short (16b)</div>
<div class=t style="left:1121.3px;top:312.00px;font-size:11.8px;line-height:14px;height:14px;color:#f2f2f2;letter-spacing:-0.665px;">signed short</div>
<div class=abs style="left:1118.7px;top:329.42px;width:490px;height:21.82px;background:#3f3f3f"></div>
<div class=abs style="left:1499.6px;top:329.42px;width:1px;height:21.82px;background:#4a4a4a"></div>
<div class=t style="left:1121.3px;top:334.00px;font-size:11.8px;line-height:14px;height:14px;color:#f2f2f2;letter-spacing:-0.544px;">int (32b)</div>
<div class=t style="left:1121.3px;top:356.00px;font-size:11.8px;line-height:14px;height:14px;color:#f2f2f2;letter-spacing:-0.642px;">signed int</div>
<div class=abs style="left:1118.7px;top:373.06px;width:490px;height:21.82px;background:#3f3f3f"></div>
<div class=abs style="left:1499.6px;top:373.06px;width:1px;height:21.82px;background:#4a4a4a"></div>
<div class=t style="left:1121.3px;top:378.00px;font-size:11.8px;line-height:14px;height:14px;color:#f2f2f2;letter-spacing:-0.585px;">long (64b)</div>
<div class=t style="left:1121.3px;top:399.00px;font-size:11.8px;line-height:14px;height:14px;color:#f2f2f2;letter-spacing:-0.623px;">signed long (64b)</div>
<div class=abs style="left:1118.7px;top:416.69px;width:490px;height:21.82px;background:#3f3f3f"></div>
<div class=abs style="left:1499.6px;top:416.69px;width:1px;height:21.82px;background:#4a4a4a"></div>
<div class=t style="left:1121.3px;top:421.00px;font-size:11.8px;line-height:14px;height:14px;color:#f2f2f2;letter-spacing:-0.658px;">double</div>
<div class=t style="left:1121.3px;top:443.00px;font-size:11.8px;line-height:14px;height:14px;color:#f2f2f2;letter-spacing:-0.784px;">ASCII</div>
<div class=t style="left:1504.0px;top:447.00px;font-size:8px;line-height:9px;height:9px;color:#f2f2f2;font-family:"DejaVu Sans",sans-serif;">▯</div>
<div class=abs style="left:1118.7px;top:460.32px;width:490px;height:21.82px;background:#3f3f3f"></div>
<div class=abs style="left:1499.6px;top:460.32px;width:1px;height:21.82px;background:#4a4a4a"></div>
<div class=t style="left:1121.3px;top:465.00px;font-size:11.8px;line-height:14px;height:14px;color:#f2f2f2;letter-spacing:-0.557px;">Unicode</div>
<div class=t style="left:1504.0px;top:468.00px;font-size:9px;line-height:10px;height:10px;color:#f2f2f2;font-family:"DejaVu Sans",sans-serif;">�</div>
<div class=t style="left:1121.3px;top:487.00px;font-size:11.8px;line-height:14px;height:14px;color:#f2f2f2;letter-spacing:-0.828px;">XOR 0xFF</div>
<div class=t style="left:1504.0px;top:487.00px;font-size:11.8px;line-height:14px;height:14px;color:#f2f2f2;letter-spacing:-0.991px;">F9</div>
<div class=abs style="left:1118.7px;top:503.96px;width:490px;height:21.82px;background:#3f3f3f"></div>
<div class=abs style="left:1499.6px;top:503.96px;width:1px;height:21.82px;background:#4a4a4a"></div>
<div class=t style="left:1121.3px;top:509.00px;font-size:11.8px;line-height:14px;height:14px;color:#f2f2f2;letter-spacing:-0.780px;">Sum (8b)</div>
<div class=t style="left:1504.0px;top:509.00px;font-size:11.8px;line-height:14px;height:14px;color:#f2f2f2;letter-spacing:-0.749px;">0x06</div>
<div class=t style="left:1121.3px;top:530.00px;font-size:11.8px;line-height:14px;height:14px;color:#f2f2f2;letter-spacing:-0.744px;">Sum (16b)</div>
<div class=t style="left:1504.0px;top:530.00px;font-size:11.8px;line-height:14px;height:14px;color:#f2f2f2;letter-spacing:-0.749px;">0x06</div>
<div class=abs style="left:1118.7px;top:547.59px;width:490px;height:21.82px;background:#3f3f3f"></div>
<div class=abs style="left:1499.6px;top:547.59px;width:1px;height:21.82px;background:#4a4a4a"></div>
<div class=t style="left:1121.3px;top:552.00px;font-size:11.8px;line-height:14px;height:14px;color:#f2f2f2;letter-spacing:-0.744px;">Sum (32b)</div>
<div class=t style="left:1504.0px;top:552.00px;font-size:11.8px;line-height:14px;height:14px;color:#f2f2f2;letter-spacing:-0.749px;">0x06</div>
<div class=t style="left:1121.3px;top:574.00px;font-size:11.8px;line-height:14px;height:14px;color:#f2f2f2;letter-spacing:-1.032px;">CRC8</div>
<div class=t style="left:1504.0px;top:574.00px;font-size:11.8px;line-height:14px;height:14px;color:#f2f2f2;letter-spacing:-0.849px;">0x81</div>
<div class=abs style="left:1118.7px;top:591.23px;width:490px;height:21.82px;background:#3f3f3f"></div>
<div class=abs style="left:1499.6px;top:591.23px;width:1px;height:21.82px;background:#4a4a4a"></div>
<div class=t style="left:1121.3px;top:596.00px;font-size:11.8px;line-height:14px;height:14px;color:#f2f2f2;letter-spacing:-0.941px;">CRC16</div>
<div class=t style="left:1504.0px;top:596.00px;font-size:11.8px;line-height:14px;height:14px;color:#f2f2f2;letter-spacing:-0.692px;">0x280</div>
<div class=t style="left:1121.3px;top:618.00px;font-size:11.8px;line-height:14px;height:14px;color:#f2f2f2;letter-spacing:-0.847px;">CRC16 CCITT</div>
<div class=t style="left:1504.0px;top:618.00px;font-size:11.8px;line-height:14px;height:14px;color:#f2f2f2;letter-spacing:-0.720px;">0x0280</div>
<div class=abs style="left:1118.7px;top:634.86px;width:490px;height:21.82px;background:#3f3f3f"></div>
<div class=abs style="left:1499.6px;top:634.86px;width:1px;height:21.82px;background:#4a4a4a"></div>
<div class=t style="left:1121.3px;top:639.00px;font-size:11.8px;line-height:14px;height:14px;color:#f2f2f2;letter-spacing:-0.758px;">CRC16 CCITT K</div>
<div class=t style="left:1504.0px;top:639.00px;font-size:11.8px;line-height:14px;height:14px;color:#f2f2f2;letter-spacing:-0.720px;">0x6536</div>
<div class=t style="left:1121.3px;top:661.00px;font-size:11.8px;line-height:14px;height:14px;color:#f2f2f2;letter-spacing:-0.941px;">CRC32</div>
<div class=t style="left:1504.0px;top:661.00px;font-size:11.8px;line-height:14px;height:14px;color:#f2f2f2;letter-spacing:-0.759px;">0x3B614AB8</div>
<svg class=abs style="left:574px;top:544px" width="6" height="24" viewBox="0 0 6 24"><g stroke="#4a8fe0" stroke-width="1.1"><path d="M1.4 4.6L4.2 2.6"/><path d="M1.4 8.6L4.2 6.6"/><path d="M1.4 12.6L4.2 10.6"/><path d="M1.4 16.6L4.2 14.6"/><path d="M1.4 20.6L4.2 18.6"/></g></svg>
</body></html>
